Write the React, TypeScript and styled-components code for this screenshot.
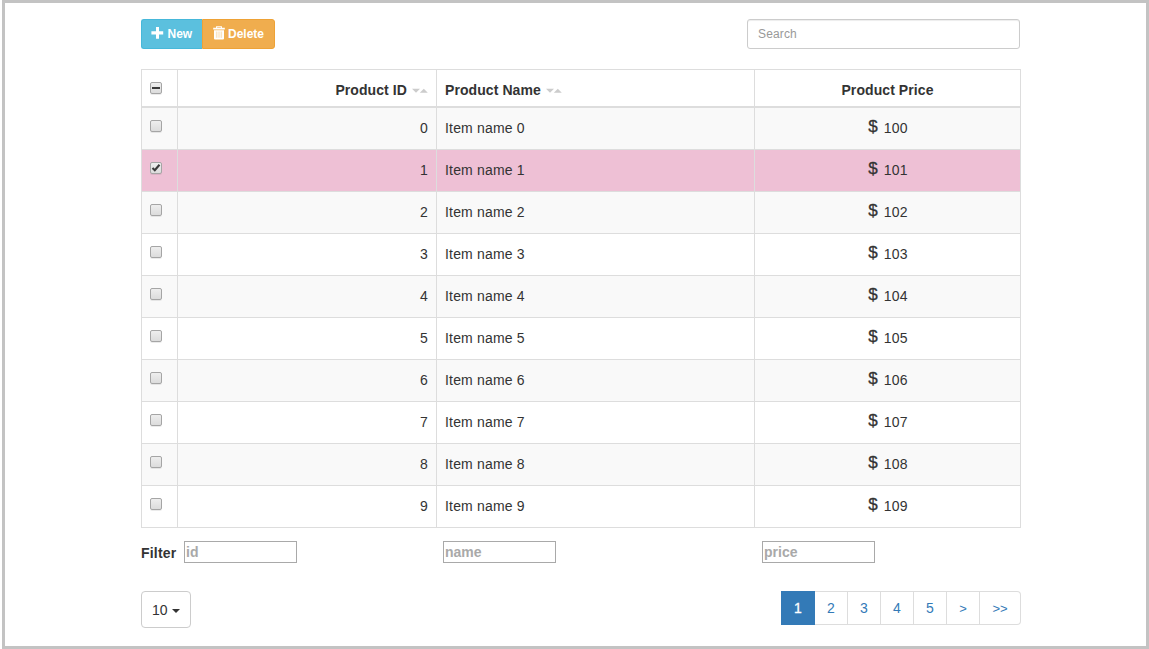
import React from "react";
import styled, { createGlobalStyle, css } from "styled-components";

const GlobalStyle = createGlobalStyle`
  * { box-sizing: border-box; }
  body {
    margin: 0;
    background: #fff;
    color: #333;
    font: 14px/20px "Liberation Sans", Arial, sans-serif;
  }
  button, input { font-family: inherit; }
`;

const Frame = styled.div`
  width: 1147px;
  height: 649px;
  margin-left: 2px;
  padding: 16px 0 0 136px;
  border: 3px solid #c3c3c3;
  overflow: hidden;
`;

const Container = styled.main`
  width: 880px;
`;

const Toolbar = styled.div`
  display: flex;
  justify-content: space-between;
  padding-right: 1px;
  margin-bottom: 20px;
`;

const ButtonGroup = styled.div`
  display: flex;
`;

const ActionButton = styled.button<{ $kind: "new" | "delete" }>`
  display: flex;
  align-items: center;
  height: 30px;
  padding: 0 0 0 9px;
  color: #fff;
  font-size: 12px;
  font-weight: bold;
  line-height: 18px;
  ${({ $kind }) =>
    $kind === "new"
      ? css`
          width: 61px;
          gap: 3.5px;
          background: #5bc0de;
          border: 1px solid #46b8da;
          border-right-width: 0;
          border-radius: 3px 0 0 3px;
        `
      : css`
          width: 73px;
          padding-left: 10px;
          gap: 3px;
          background: #f0ad4e;
          border: 1px solid #eea236;
          border-radius: 0 3px 3px 0;
        `}
  svg { margin-bottom: 2px; }
`;

const Search = styled.input`
  width: 273px;
  height: 30px;
  padding: 5px 10px;
  border: 1px solid #ccc;
  border-radius: 3px;
  box-shadow: inset 0 1px 1px rgba(0, 0, 0, 0.075);
  font-size: 12px;
  letter-spacing: 0.15px;
  &::placeholder { color: #999; opacity: 1; }
`;

const Table = styled.div`
  border: 1px solid #ddd;
  border-bottom: 0;
`;

const Row = styled.div<{ $tone?: "striped" | "selected" }>`
  display: grid;
  grid-template-columns: 36px 259px 318px 265px;
  height: 42px;
  border-bottom: 1px solid #ddd;
  background: ${({ $tone }) =>
    $tone === "selected" ? "#eec0d5" : $tone === "striped" ? "#f9f9f9" : "#fff"};
  letter-spacing: 0.18px;
`;

const HeaderRow = styled(Row)`
  height: 38px;
  border-bottom-width: 2px;
  font-weight: bold;
  letter-spacing: 0.08px;
`;

const Cell = styled.div<{ $align?: "flex-end" | "center" }>`
  display: flex;
  justify-content: ${({ $align }) => $align ?? "flex-start"};
  padding: 10px 8px 0;
  border-right: 1px solid #ddd;
  white-space: pre;
  &:last-child { border-right: 0; }
`;

const CheckCell = styled(Cell)`
  padding-top: 12px;
`;

const Check = styled.span`
  display: block;
  width: 12px;
  height: 12px;
  border: 1px solid #a5a5a5;
  border-radius: 2px;
  background: linear-gradient(#eee, #dcdcdc);
  box-shadow: 0 1px 0 rgba(0, 0, 0, 0.08);
  svg { display: block; }
`;

const SortMark = styled.svg`
  margin: 8px 0 0 5px;
`;

const Dollar = styled.span`
  margin: 0 6px 0 1px;
  font-size: 17px;
  line-height: 18px;
  letter-spacing: 0;
  -webkit-text-stroke: 0.3px #333;
`;

const FilterRow = styled.div`
  display: grid;
  grid-template-columns: 43px 259px 319px 113px;
  height: 22px;
  margin-top: 13px;
  font-weight: bold;
  line-height: 24px;
  letter-spacing: 0.2px;
`;

const FilterInput = styled.input`
  width: 113px;
  height: 22px;
  padding: 0 1px 1px;
  border: 1px solid #a9a9a9;
  font-size: 14px;
  font-weight: bold;
  letter-spacing: 0;
  &::placeholder { color: #a9a9a9; opacity: 1; }
`;

const Footer = styled.div`
  display: flex;
  justify-content: space-between;
  align-items: flex-start;
  margin-top: 28px;
`;

const PageSize = styled.button`
  display: flex;
  align-items: center;
  gap: 4px;
  width: 50px;
  height: 37px;
  padding: 1px 0 0 10px;
  border: 1px solid #ccc;
  border-radius: 4px;
  background: #fff;
  color: #333;
  font-size: 14px;
`;

const Caret = styled.span`
  margin-top: 2px;
  border: 4px solid transparent;
  border-top-color: #333;
  border-bottom: 0;
`;

const Pagination = styled.nav`
  display: flex;
`;

const Page = styled.a<{ $active?: boolean; $wide?: boolean }>`
  width: ${({ $active, $wide }) => ($active ? 34 : $wide ? 41 : 33)}px;
  height: 34px;
  padding-top: 6px;
  border: 1px solid #ddd;
  border-left: 0;
  color: #337ab7;
  text-align: center;
  &:last-child { border-radius: 0 4px 4px 0; }
  ${({ $active }) =>
    $active &&
    css`
      padding-left: 1px;
      border-color: #337ab7;
      background: #337ab7;
      color: #fff;
      -webkit-text-stroke: 0.3px #fff;
    `}
`;

const Arrow = styled.span`
  font-size: 13px;
`;

const PlusIcon = () => (
  <svg width="13" height="12" viewBox="0 0 13 12">
    <path fill="#fff" d="M5 0h3v4.3h4.2v3.2H8v4.3H5V7.5H.4V4.3H5z" />
  </svg>
);

const TrashIcon = () => (
  <svg width="12" height="14" viewBox="0 0 12 14">
    <path d="M3.6 2V.7h4.8V2" fill="none" stroke="#fff" strokeWidth="1.1" />
    <path fill="#fff" d="M.2 1.8h11.6v1.6H.2zM1 4.2h10v8.3q0 1-1 1H2q-1 0-1-1z" />
    <path d="M3.4 5.5v6.3M5.1 5.5v6.3M6.9 5.5v6.3M8.6 5.5v6.3" stroke="#f0ad4e" strokeOpacity=".55" strokeWidth=".7" />
  </svg>
);

const SortIcon = () => (
  <SortMark width="16" height="5" viewBox="0 0 16 5">
    <path fill="#ccc" d="M0 .8h8L4 4.8zM7.8 4.8h8l-4-4z" />
  </SortMark>
);

const Checkbox = ({ state }: { state?: "checked" | "mixed" }) => (
  <Check role="checkbox" aria-checked={state === "checked" ? true : state === "mixed" ? "mixed" : false}>
    {state && (
      <svg width="10" height="10" viewBox="0 0 10 10">
        {state === "mixed" ? (
          <path fill="#3a3a3a" d="M1 4h8v2H1z" />
        ) : (
          <path d="M1.5 5l2.3 2.3L8.5 1.7" fill="none" stroke="#3a3a3a" strokeWidth="2.1" />
        )}
      </svg>
    )}
  </Check>
);

const items = Array.from({ length: 10 }, (_, id) => ({
  id,
  name: `Item name ${id}`,
  price: 100 + id,
}));
const selectedId = 1;

export default function App() {
  return (
    <>
      <GlobalStyle />
      <Frame>
        <Container>
          <Toolbar>
            <ButtonGroup>
              <ActionButton $kind="new"><PlusIcon />New</ActionButton>
              <ActionButton $kind="delete"><TrashIcon />Delete</ActionButton>
            </ButtonGroup>
            <Search placeholder="Search" />
          </Toolbar>
          <Table>
            <HeaderRow>
              <CheckCell><Checkbox state="mixed" /></CheckCell>
              <Cell $align="flex-end">Product ID<SortIcon /></Cell>
              <Cell>Product Name<SortIcon /></Cell>
              <Cell $align="center">Product Price</Cell>
            </HeaderRow>
            {items.map(({ id, name, price }) => (
              <Row key={id} $tone={id === selectedId ? "selected" : id % 2 === 0 ? "striped" : undefined}>
                <CheckCell><Checkbox state={id === selectedId ? "checked" : undefined} /></CheckCell>
                <Cell $align="flex-end">{id}</Cell>
                <Cell>{name}</Cell>
                <Cell $align="center"><Dollar>$</Dollar>{price}</Cell>
              </Row>
            ))}
          </Table>
          <FilterRow>
            Filter
            <FilterInput placeholder="id" />
            <FilterInput placeholder="name" />
            <FilterInput placeholder="price" />
          </FilterRow>
          <Footer>
            <PageSize>10<Caret /></PageSize>
            <Pagination>
              <Page $active>1</Page>
              {["2", "3", "4", "5"].map((label) => <Page key={label}>{label}</Page>)}
              <Page><Arrow>&gt;</Arrow></Page>
              <Page $wide><Arrow>&gt;&gt;</Arrow></Page>
            </Pagination>
          </Footer>
        </Container>
      </Frame>
    </>
  );
}
